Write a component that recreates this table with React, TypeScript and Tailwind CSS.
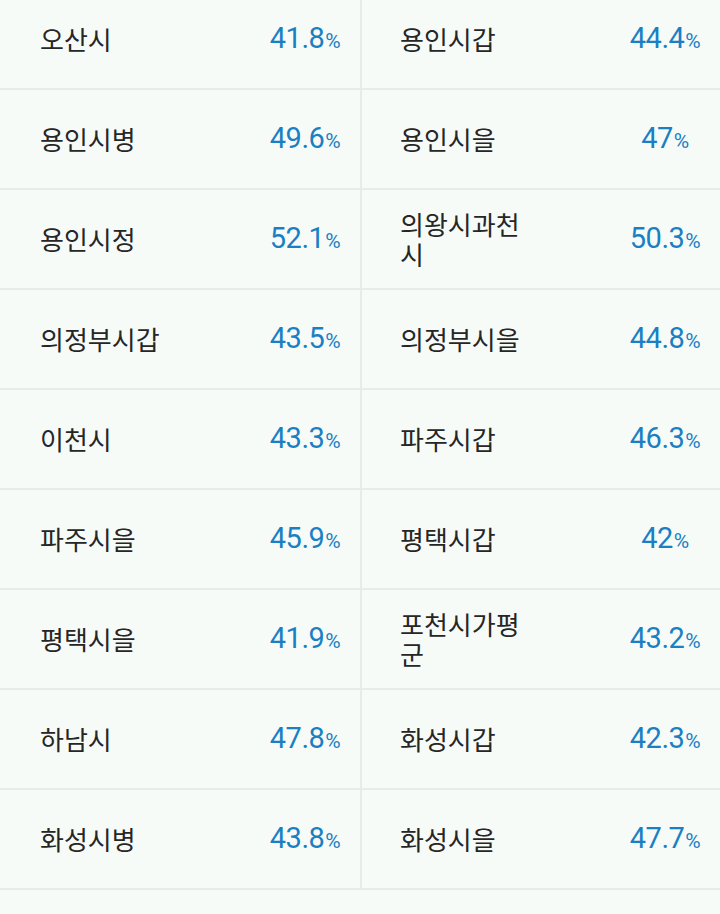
const rows: [string, string][] = [
  ['오산시', '41.8'],
  ['용인시갑', '44.4'],
  ['용인시병', '49.6'],
  ['용인시을', '47'],
  ['용인시정', '52.1'],
  ['의왕시과천시', '50.3'],
  ['의정부시갑', '43.5'],
  ['의정부시을', '44.8'],
  ['이천시', '43.3'],
  ['파주시갑', '46.3'],
  ['파주시을', '45.9'],
  ['평택시갑', '42'],
  ['평택시을', '41.9'],
  ['포천시가평군', '43.2'],
  ['하남시', '47.8'],
  ['화성시갑', '42.3'],
  ['화성시병', '43.8'],
  ['화성시을', '47.7'],
];

function Cell({ name, rate, left }: { name: string; rate: string; left: boolean }) {
  return (
    <div
      className={`flex items-center justify-between h-[100px] border-b-2 border-[#e7ece9] ${
        left ? 'pl-10 pr-[10px]' : 'pl-[38px] pr-[10px] border-l-2'
      }`}
    >
      <div className="w-[136px] text-[26px] leading-[30px] text-[#262626] font-['Noto_Sans_CJK_KR',sans-serif] break-all">
        {name}
      </div>
      <div className="w-[90px] text-center whitespace-nowrap text-[#1a7fc3] font-['Roboto',sans-serif] text-[29px] tracking-[-0.5px]">
        {rate}
        <span className="text-[21px] ml-[1px]">%</span>
      </div>
    </div>
  );
}

export default function App() {
  return (
    <div className="w-[720px] h-[914px] overflow-hidden bg-[#f7fbf8]">
      <div className="grid grid-cols-2 -mt-[10px]">
        {rows.map(([name, rate], i) => (
          <Cell key={name} name={name} rate={rate} left={i % 2 === 0} />
        ))}
      </div>
    </div>
  );
}
